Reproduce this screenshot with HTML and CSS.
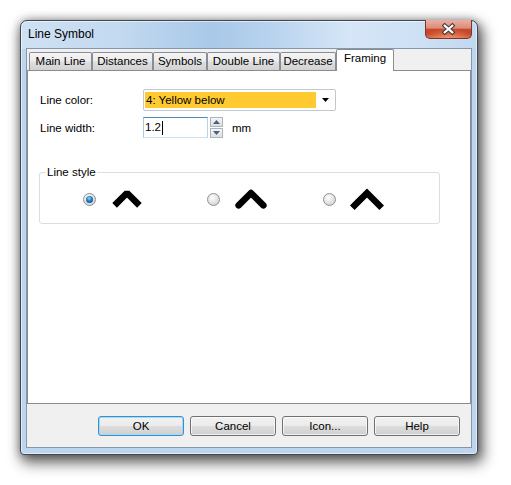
FILE: index.html
```html
<!DOCTYPE html>
<html lang="en">
<head>
  <meta charset="UTF-8">
  <title>Line Symbol</title>
  <link rel="stylesheet" href="styles.css">
</head>
<body>
  <div class="window">
    <div class="titlebar">
      <span class="title">Line Symbol</span>
      <span class="close-btn">
        <svg width="47" height="18" viewBox="0 0 47 18">
          <path d="M19.5 5.5 L27.5 12.5 M27.5 5.5 L19.5 12.5" stroke="#3b3b40" stroke-width="4.4" stroke-linecap="square"/>
          <path d="M19.5 5.5 L27.5 12.5 M27.5 5.5 L19.5 12.5" stroke="#ffffff" stroke-width="2.2" stroke-linecap="square"/>
        </svg>
      </span>
    </div>

    <div class="client">
      <div class="tabs">
        <span class="tab tab-main">Main Line</span>
        <span class="tab tab-dist">Distances</span>
        <span class="tab tab-sym">Symbols</span>
        <span class="tab tab-double">Double Line</span>
        <span class="tab tab-dec">Decrease</span>
        <span class="tab tab-frame active">Framing</span>
      </div>

      <div class="panel">
        <div class="form">
          <label class="field-label">Line color:</label>
          <div class="combo">
            <span class="combo-value">4: Yellow below</span>
            <span class="combo-arrow">
              <svg width="8" height="4" viewBox="0 0 8 4"><path d="M0 0 H7 L3.5 4 Z" fill="#000"/></svg>
            </span>
          </div>

          <label class="field-label">Line width:</label>
          <div class="width-row">
            <div class="edit">1.2<span class="caret"></span></div>
            <div class="spin">
              <span class="spin-btn">
                <svg width="7" height="4" viewBox="0 0 7 4"><path d="M0 4 H7 L3.5 0 Z" fill="#4a5f82"/></svg>
              </span>
              <span class="spin-btn">
                <svg width="7" height="4" viewBox="0 0 7 4"><path d="M0 0 H7 L3.5 4 Z" fill="#4a5f82"/></svg>
              </span>
            </div>
            <span class="unit">mm</span>
          </div>
        </div>

        <fieldset class="group">
          <legend>Line style</legend>
          <div class="styles">
            <div class="style-option">
              <span class="radio checked"></span>
              <!-- flat caps, bevel join -->
              <svg class="stroke-sample" width="36" height="26" viewBox="0 0 36 26">
                <polyline points="5.6,19.4 18,7 30.4,19.4" fill="none" stroke="#000" stroke-width="6.5" stroke-linejoin="bevel" stroke-linecap="butt"/>
              </svg>
            </div>
            <div class="style-option">
              <span class="radio"></span>
              <!-- round caps, round join -->
              <svg class="stroke-sample" width="36" height="26" viewBox="0 0 36 26">
                <polyline points="5.6,19.4 18,7 30.4,19.4" fill="none" stroke="#000" stroke-width="6.5" stroke-linejoin="round" stroke-linecap="round"/>
              </svg>
            </div>
            <div class="style-option">
              <span class="radio"></span>
              <!-- square caps, miter join -->
              <svg class="stroke-sample" width="36" height="26" viewBox="0 0 36 26">
                <polyline points="5.6,19.4 18,7 30.4,19.4" fill="none" stroke="#000" stroke-width="6.5" stroke-linejoin="miter" stroke-linecap="square"/>
              </svg>
            </div>
          </div>
        </fieldset>
      </div>

      <div class="buttons">
        <button class="btn default">OK</button>
        <button class="btn">Cancel</button>
        <button class="btn">Icon...</button>
        <button class="btn">Help</button>
      </div>
    </div>
  </div>
</body>
</html>
```

FILE: styles.css
```css
body {
  margin: 0;
  min-height: 485px;
  background: #fff;
  font-family: "Liberation Sans", Arial, sans-serif;
  font-size: 11.5px;
  color: #000;
}

.window {
  box-sizing: border-box;
  width: 458px;
  height: 435px;
  margin: 20px 0 0 20px;
  padding: 0 5px 6px 5px;
  border: 1px solid #3f4852;
  border-radius: 7px 7px 4px 4px;
  background:
    linear-gradient(90deg, #cfe1f4 0%, #c2d9f0 22%, #a9c8e8 42%, #b8d3ee 55%, #d6e6f7 72%, #cde0f4 88%, #c2d8ef 100%) top / 100% 28px no-repeat,
    #bdd5ef;
  box-shadow:
    inset 0 0 0 1px rgba(255,255,255,0.55),
    3px 6px 14px 2px rgba(0,0,0,0.6),
    0 0 9px rgba(0,0,0,0.3);
  display: flex;
  flex-direction: column;
}

.titlebar {
  height: 27px;
  display: flex;
  justify-content: space-between;
  align-items: flex-start;
}

.title {
  padding: 6px 0 0 2px;
  font-size: 12px;
  line-height: 15px;
}

.close-btn {
  box-sizing: border-box;
  width: 47px;
  height: 19px;
  margin-top: -1px;
  border: 1px solid #7d3527;
  border-top: none;
  border-radius: 0 0 5px 5px;
  background:
    radial-gradient(ellipse 60% 50% at 50% 100%, rgba(255,170,120,0.7), rgba(255,170,120,0) 100%),
    linear-gradient(#eab0a3 0%, #dc8b79 45%, #c7482d 52%, #c24328 80%, #d5613f 100%);
  display: flex;
}

.client {
  flex: 1;
  display: flex;
  flex-direction: column;
  border: 1px solid #8497ac;
  background: #f0f0f0;
}

/* tab strip */
.tabs {
  display: flex;
  align-items: flex-end;
  height: 21px;
  padding-left: 2px;
}

.tab {
  box-sizing: border-box;
  height: 18px;
  border: 1px solid #898c95;
  border-bottom: none;
  border-radius: 2px 2px 0 0;
  background: linear-gradient(#f4f4f4 0%, #ececec 45%, #dedede 55%, #d2d2d2 100%);
  text-align: center;
  line-height: 17px;
}

.tab-main { width: 63px; }
.tab-dist { width: 61px; }
.tab-sym { width: 54px; }
.tab-double { width: 73px; }
.tab-dec { width: 56px; }
.tab-frame { width: 58px; }

.tab.active {
  height: 22px;
  margin-bottom: -1px;
  background: #fff;
  line-height: 17px;
  position: relative;
}

.panel {
  flex: none;
  box-sizing: border-box;
  height: 334px;
  border: 1px solid #898c95;
  background: #fff;
}

.form {
  display: grid;
  grid-template-columns: 103px 193px;
  grid-template-rows: 22px 21px;
  row-gap: 6px;
  align-items: center;
  padding: 18px 0 0 12px;
}

.combo {
  box-sizing: border-box;
  height: 22px;
  border: 1px solid #c3c6cc;
  border-radius: 2px;
  padding: 2px 0 2px 1px;
  display: flex;
  align-items: center;
}

.combo-value {
  width: 171px;
  height: 16px;
  background: #ffca30;
  line-height: 16px;
  padding-left: 1px;
  box-sizing: border-box;
}

.combo-arrow {
  flex: 1;
  display: flex;
  justify-content: center;
  padding-left: 1px;
}

.width-row {
  display: flex;
  align-items: center;
  height: 21px;
}

.edit {
  box-sizing: border-box;
  width: 65px;
  height: 21px;
  border: 1px solid;
  border-color: #4f88b8 #b6d3e9 #c8e2f2 #a9c9e4;
  padding-left: 1px;
  line-height: 19px;
  display: flex;
  align-items: center;
}

.caret {
  width: 1px;
  height: 14px;
  background: #000;
  margin-left: 1px;
}

.spin {
  display: flex;
  flex-direction: column;
  margin-left: 2px;
}

.spin-btn {
  box-sizing: border-box;
  width: 13px;
  height: 10px;
  border: 1px solid #aeb4be;
  background: linear-gradient(#f6f6f6, #dedfe2);
  display: flex;
  align-items: center;
  justify-content: center;
}

.spin-btn + .spin-btn {
  margin-top: 1px;
}

.unit {
  margin-left: 9px;
}

/* line style group */
.group {
  margin: 27px 30px 0 11px;
  padding: 7px 0 11px 0;
  border: 1px solid #d5dfe5;
  border-radius: 3px;
}

.group legend {
  margin-left: 6px;
  padding: 0 1px;
  line-height: 14px;
}

.styles {
  display: grid;
  grid-template-columns: 124px 116px auto;
  padding-left: 43px;
}

.style-option {
  display: flex;
  align-items: center;
}

.stroke-sample {
  display: block;
  margin-left: 13px;
}

.radio {
  box-sizing: border-box;
  width: 13px;
  height: 13px;
  border: 1px solid #8f9092;
  border-radius: 50%;
  background: radial-gradient(circle at 40% 35%, #ffffff 0%, #e6e6e6 45%, #c9c9c9 100%);
  position: relative;
}

.radio.checked::after {
  content: "";
  position: absolute;
  inset: 2px;
  border-radius: 50%;
  background: radial-gradient(circle at 45% 35%, #8fd8f8 0%, #2278c0 45%, #0a3f78 100%);
}

/* bottom buttons */
.buttons {
  flex: 1;
  display: flex;
  justify-content: flex-end;
  align-items: flex-start;
  gap: 6px;
  padding: 12px 11px 0 0;
}

.btn {
  box-sizing: border-box;
  width: 86px;
  height: 20px;
  padding: 0;
  border: 1px solid #707070;
  border-radius: 3px;
  background: linear-gradient(#f2f2f2 0%, #ebebeb 48%, #dddddd 52%, #cfcfcf 100%);
  box-shadow: inset 0 0 0 1px rgba(255,255,255,0.7);
  font-family: "Liberation Sans", Arial, sans-serif;
  font-size: 11.5px;
  color: #000;
}

.btn.default {
  border-color: #3c8ec9;
  box-shadow: inset 0 0 0 1px #9fdcf7;
}
```
